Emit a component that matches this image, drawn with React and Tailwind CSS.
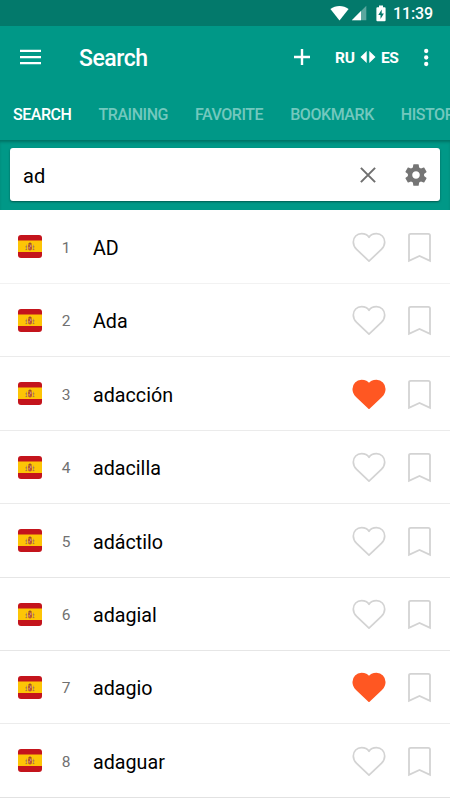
const TABS = [
  { label: 'SEARCH', active: true },
  { label: 'TRAINING' },
  { label: 'FAVORITE' },
  { label: 'BOOKMARK' },
  { label: 'HISTORY' },
];

const ROWS = [
  { word: 'AD', height: 'h-[74px]', line: 'border-[#f2f2f2]' },
  { word: 'Ada', height: 'h-[73px]', line: 'border-[#ebebeb]' },
  { word: 'adacción', height: 'h-[74px]', line: 'border-[#ebebeb]', liked: true },
  { word: 'adacilla', height: 'h-[73px]', line: 'border-[#ebebeb]' },
  { word: 'adáctilo', height: 'h-[74px]', line: 'border-[#e6e6e6]' },
  { word: 'adagial', height: 'h-[73px]', line: 'border-[#e6e6e6]' },
  { word: 'adagio', height: 'h-[73px]', line: 'border-[#ececec]', liked: true },
  { word: 'adaguar', height: 'h-[74px]', line: 'border-[#e2e2e2]' },
];

function StatusBar() {
  return (
    <div className="flex h-[26px] shrink-0 items-center justify-end bg-[#03796b] pr-[18px] text-white">
      <svg className="h-[16px] w-[19px]" viewBox="0 0 19 16" fill="currentColor">
        <path d="M.4 4.1C5.6-.1 13.4-.1 18.6 4.1L9.5 15.4z" />
      </svg>
      <svg className="ml-[2px] h-[16px] w-[16px]" viewBox="0 0 16 16" fill="currentColor">
        <path d="M15.3.8v14.5H.8z" opacity=".35" />
        <path d="M10 6.1v9.2H.8z" />
      </svg>
      <svg className="ml-[9px] h-[17px] w-[10px]" viewBox="0 0 10 17">
        <path d="M3 .5h4v1.8h1.6q1 0 1 1v12q0 1-1 1H1.4q-1 0-1-1v-12q0-1 1-1H3z" fill="currentColor" />
        <path d="M5.7 4.6 2.3 10h2.2v4.1l3.4-5.5H5.7z" fill="#03796b" />
      </svg>
      <span className="ml-[7px] w-[39px] whitespace-nowrap pt-[2px] text-[16px] font-medium leading-none tracking-[-0.1px]">11:39</span>
    </div>
  );
}

function AppBar() {
  return (
    <div className="flex h-16 shrink-0 items-center pl-5 text-white">
      <svg className="-mt-[2px] h-[16px] w-[21px]" viewBox="0 0 21 16" fill="currentColor">
        <path d="M0 .8h21v2.2H0zM0 7h21v2.2H0zM0 13h21v2.2H0z" />
      </svg>
      <h1 className="ml-[38px] w-[214px] pt-px text-[23px] font-medium leading-none tracking-[-0.45px]">Search</h1>
      <svg className="-mt-[2px] h-[18px] w-[18px]" viewBox="0 0 18 18" fill="currentColor">
        <path d="M7.8 1h2.4v6.8H17v2.4h-6.8V17H7.8v-6.8H1V7.8h6.8z" />
      </svg>
      <span className="ml-[24px] w-[20px] whitespace-nowrap pt-px text-[15.5px] font-bold leading-none tracking-[-0.3px]">RU</span>
      <svg className="-mt-[2px] ml-[5px] h-[12px] w-[16px]" viewBox="0 0 16 12" fill="currentColor">
        <path d="M6.7 0v12L.5 6zM9.3 0v12l6.2-6z" />
      </svg>
      <span className="ml-[5px] w-[19px] whitespace-nowrap pt-px text-[15.5px] font-bold leading-none tracking-[-0.5px]">ES</span>
      <svg className="-mt-[2px] ml-[24px] h-[19px] w-[5px]" viewBox="0 0 5 19" fill="currentColor">
        <circle cx="2.2" cy="3" r="2.15" />
        <circle cx="2.2" cy="9.5" r="2.15" />
        <circle cx="2.2" cy="16" r="2.15" />
      </svg>
    </div>
  );
}

function Tabs() {
  return (
    <nav className="flex h-[50px] shrink-0 items-center gap-[27px] overflow-hidden whitespace-nowrap pl-[13px] text-[16px] font-medium leading-none tracking-[-0.45px]">
      {TABS.map((tab) => (
        <span key={tab.label} className={tab.active ? 'text-white' : 'text-[#73c8be]'}>
          {tab.label}
        </span>
      ))}
    </nav>
  );
}

function SearchBox() {
  return (
    <div className="h-[70px] shrink-0 px-[10px] pt-2 shadow-[inset_0_3px_3px_-1px_rgba(0,60,50,0.4)]">
      <div className="flex h-[53px] items-center rounded-[3px] bg-white pl-[13px] pr-[11px] shadow-[0_1px_2px_rgba(0,40,35,0.55)]">
        <span className="flex-1 pt-[2px] text-[20px] leading-none text-black">ad</span>
        <svg className="h-4 w-4" viewBox="0 0 16 16" fill="none" stroke="#6f6f6f" strokeWidth="2">
          <path d="M.9.9 15.1 15.1M15.1.9.9 15.1" />
        </svg>
        <svg className="ml-[27px] h-[26px] w-[26px]" viewBox="0 0 24 24" fill="#757575">
          <path d="M19.43 12.98c.04-.32.07-.64.07-.98s-.03-.66-.07-.98l2.11-1.65c.19-.15.24-.42.12-.64l-2-3.46c-.12-.22-.39-.3-.61-.22l-2.49 1c-.52-.4-1.08-.73-1.69-.98l-.38-2.65C14.46 2.18 14.25 2 14 2h-4c-.25 0-.46.18-.49.42l-.38 2.65c-.61.25-1.17.59-1.69.98l-2.49-1c-.23-.09-.49 0-.61.22l-2 3.46c-.13.22-.07.49.12.64l2.11 1.65c-.04.32-.07.65-.07.98s.03.66.07.98l-2.11 1.65c-.19.15-.24.42-.12.64l2 3.46c.12.22.39.3.61.22l2.49-1c.52.4 1.08.73 1.69.98l.38 2.65c.03.24.24.42.49.42h4c.25 0 .46-.18.49-.42l.38-2.65c.61-.25 1.17-.59 1.69-.98l2.49 1c.23.09.49 0 .61-.22l2-3.46c.12-.22.07-.49-.12-.64l-2.11-1.65zM12 15.5c-1.93 0-3.5-1.57-3.5-3.5s1.57-3.5 3.5-3.5 3.5 1.57 3.5 3.5-1.57 3.5-3.5 3.5z" />
        </svg>
      </div>
    </div>
  );
}

function SpanishFlag() {
  return (
    <svg className="h-[23px] w-6 shrink-0 overflow-hidden rounded-[3px]" viewBox="0 0 24 23">
      <path d="M0 0h24v23H0z" fill="#c4141c" />
      <path d="M0 5.5h24v11.6H0z" fill="#fdc506" />
      <path d="M8 9.8h1v5H8zM15 9.8h1v5h-1z" fill="#b99a58" />
      <path d="M10 9.6h4v4q0 1.8-2 2-2-.2-2-2z" fill="#bd5631" />
      <path d="M10.4 8.2q1.6-1.2 3.2 0l-.3 1.4h-2.6z" fill="#9b502b" />
      <path d="M12.2 10.3h1.2v1.4h-1.2zM10.5 12.2h1.2v1.4h-1.2z" fill="#d8aaa0" />
      <path d="M7.4 11.8h1.8M14.7 11.8h1.8M7.5 14.6h1.7M14.7 14.6h1.7" stroke="#a86437" strokeWidth=".8" />
    </svg>
  );
}

function Heart({ filled }) {
  return (
    <svg
      className="mt-px h-[31px] w-[35px] shrink-0"
      viewBox="0.5 0 35 31"
      fill={filled ? '#ff5722' : 'none'}
      stroke={filled ? '#ff5722' : '#d3d3d3'}
      strokeWidth="1.7"
      strokeLinejoin="round"
    >
      <path d="M17.5 29.2 5.1 17.3C2.5 14.8 1.8 12.8 1.8 10c0-4.9 3.6-8.3 8.2-8.3 3.2 0 6 1.2 7.5 3.6C19 2.9 21.8 1.7 25 1.7c4.6 0 8.2 3.4 8.2 8.3 0 2.8-.7 4.8-3.3 7.3z" />
    </svg>
  );
}

function Bookmark() {
  return (
    <svg className="mt-px h-[31px] w-[25px] shrink-0" viewBox="0 0 25 31" fill="none" stroke="#d3d3d3" strokeWidth="1.8">
      <path d="M2 28.8V3.5q0-1.7 1.7-1.7h17.6Q23 1.8 23 3.5v25.3L12.5 24z" />
    </svg>
  );
}

function ResultRow({ row, number }) {
  return (
    <li className={`flex shrink-0 items-center border-b pl-[18px] pr-[18px] ${row.height} ${row.line}`}>
      <SpanishFlag />
      <span className="ml-[14px] w-5 pt-[4px] text-center text-[15.5px] leading-none text-[#717171]">{number}</span>
      <span className="ml-[17px] flex-1 pt-[4px] text-[19.7px] leading-none text-black">{row.word}</span>
      <Heart filled={row.liked} />
      <span className="ml-5 flex">
        <Bookmark />
      </span>
    </li>
  );
}

export default function App() {
  return (
    <main className="flex h-[800px] w-[450px] flex-col overflow-hidden bg-white font-['Roboto',sans-serif]">
      <header className="flex shrink-0 flex-col bg-[#009887]">
        <StatusBar />
        <AppBar />
        <Tabs />
        <SearchBox />
      </header>
      <ul className="flex flex-col">
        {ROWS.map((row, index) => (
          <ResultRow key={row.word} row={row} number={index + 1} />
        ))}
      </ul>
    </main>
  );
}
